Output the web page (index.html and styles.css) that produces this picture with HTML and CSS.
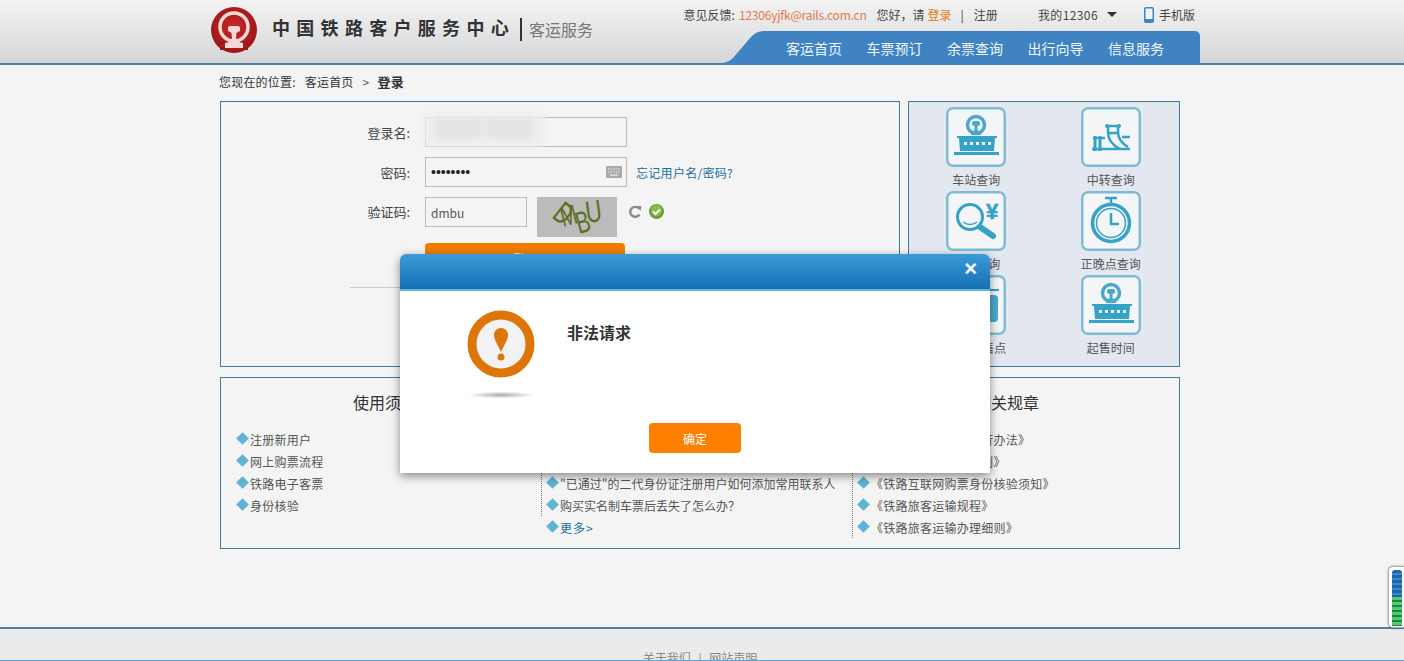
FILE: index.html
```html
<!DOCTYPE html>
<html lang="zh-CN">
<head>
    <meta charset="UTF-8">
    <title>登录 - 中国铁路客户服务中心</title>
    <link rel="stylesheet" href="styles.css">
</head>
<body>

    <svg class="icon-defs" width="0" height="0">
        <symbol id="stationIcon" viewBox="0 0 60 60">
            <circle cx="30" cy="18" r="8.500" fill="#f3f5f7" stroke="#4aa9cb" stroke-width="3.500"/>
            <path d="M26 16 q0 -2 2 -2 h4 q2 0 2 2 v2 l-2.500 1 v4 l3.500 3 v2 h-10 v-2 l3.500 -3 v-4 l-2.500 -1z" fill="#4aa9cb"/>
            <rect x="11" y="29" width="40" height="2" fill="#35a3c7"/>
            <path d="M13 31 h36 l-1 13 h-34z" fill="#35a3c7"/>
            <g fill="#f3f5f7">
                <rect x="18" y="35" width="3" height="3"/>
                <rect x="24" y="35" width="3" height="3"/>
                <rect x="30" y="35" width="3" height="3"/>
                <rect x="36" y="35" width="3" height="3"/>
                <rect x="42" y="35" width="3" height="3"/>
            </g>
            <rect x="8" y="45" width="45" height="3" fill="#35a3c7"/>
        </symbol>
    </svg>

    <!-- Header -->
    <div class="header">
        <div class="header-inner">
            <div class="brand">
                <svg class="logo" width="46" height="46" viewBox="0 0 46 46">
                    <defs>
                        <radialGradient id="logoRed" cx="50%" cy="45%" r="55%">
                            <stop offset="0" stop-color="#c92a2a"/>
                            <stop offset="1" stop-color="#9d1518"/>
                        </radialGradient>
                    </defs>
                    <circle cx="23" cy="23" r="23" fill="url(#logoRed)"/>
                    <circle cx="23" cy="20" r="14" fill="none" stroke="#f6d9d4" stroke-width="3.500"/>
                    <path d="M9 35 h28 v8 h-28z" fill="url(#logoRed)"/>
                    <path d="M17 21 q0 -2 2 -2 h8 q2 0 2 2 v3 q-2.500 1 -3.500 2 l-0.500 6 q1 3 7 4 v5 h-18 v-5 q6 -1 7 -4 l-0.500 -6 q-1 -1 -3.500 -2z" fill="#f6d9d4"/>
                </svg>
                <span class="brand-name">中国铁路客户服务中心</span>
                <span class="brand-sub">客运服务</span>
            </div>
            <div class="header-right">
                <div class="top-links">
                    <span>意见反馈:</span>
                    <a class="mail" href="#">12306yjfk@rails.com.cn</a>
                    <span class="hello">您好&#65292;请</span>
                    <a class="login-link" href="#">登录</a>
                    <span class="sep">|</span>
                    <a href="#">注册</a>
                    <a class="my12306" href="#">我的12306</a>
                    <span class="caret"></span>
                    <svg class="phone" width="10" height="16" viewBox="0 0 10 16">
                        <rect x="0.75" y="0.75" width="8.500" height="14.500" rx="1.200" fill="#eef4fa" stroke="#3f83c2" stroke-width="1.500"/>
                        <rect x="1" y="12" width="8" height="3" fill="#3f83c2"/>
                    </svg>
                    <a href="#">手机版</a>
                </div>
                <div class="nav">
                    <svg class="nav-curve" width="69" height="33" viewBox="0 0 69 33">
                        <path d="M69 0 H47 q-8 0 -13 6 L16 27 q-4 4 -10 5 H0 V33 H69z" fill="#3f83c2"/>
                    </svg>
                    <ul class="nav-items">
                        <li>客运首页</li>
                        <li>车票预订</li>
                        <li>余票查询</li>
                        <li>出行向导</li>
                        <li>信息服务</li>
                    </ul>
                </div>
            </div>
        </div>
    </div>

    <div class="main">
        <div class="crumbs">
            <span>您现在的位置:</span>
            <a href="#">客运首页</a>
            <span class="arrow">&gt;</span>
            <strong>登录</strong>
        </div>

        <div class="top-row">
            <!-- Login form -->
            <div class="login-box">
                <div class="form-row">
                    <label>登录名:</label>
                    <div class="blur-wrap">
                        <input class="field" type="text">
                        <div class="blur-mask"><span></span><span></span></div>
                    </div>
                </div>
                <div class="form-row">
                    <label>密码:</label>
                    <div class="blur-wrap">
                        <input class="field pass" type="password" value="12345678">
                        <svg class="keyboard" width="16" height="12" viewBox="0 0 16 12">
                            <rect width="16" height="12" rx="1" fill="#a9a9a9"/>
                            <path d="M2 3 h12 M2 6 h12" stroke="#eee" stroke-width="1.200" stroke-dasharray="1.500 1"/>
                            <path d="M4 9 h8" stroke="#eee" stroke-width="1.200"/>
                        </svg>
                    </div>
                    <a class="forgot" href="#">忘记用户名/密码?</a>
                </div>
                <div class="form-row code-row">
                    <label>验证码:</label>
                    <input class="field code" type="text" value="dmbu">
                    <svg class="captcha" width="80" height="40" viewBox="0 0 80 40">
                        <rect width="80" height="40" fill="#bbb"/>
                        <g class="captcha-text">
                            <text transform="translate(14 20) rotate(38) scale(0.75 1.100)">D</text>
                            <text transform="translate(26 30) rotate(-14) scale(0.7 1)">M</text>
                            <text transform="translate(42 37) rotate(-16) scale(0.75 1.100)">B</text>
                            <text transform="translate(50 26) rotate(-8) scale(0.8 1.100)">U</text>
                        </g>
                    </svg>
                    <svg class="refresh" width="14" height="14" viewBox="0 0 14 14">
                        <path d="M11.500 9.500 a5 5 0 1 1 -0.500 -6" fill="none" stroke="#8a8a8a" stroke-width="2.400"/>
                        <path d="M8 1 l5.500 0 l-1 5z" fill="#8a8a8a"/>
                    </svg>
                    <svg class="check" width="15" height="15" viewBox="0 0 15 15">
                        <circle cx="7.500" cy="7.500" r="7.500" fill="#6a9e30"/>
                        <circle cx="7.500" cy="6.500" r="5.500" fill="#8cbd4b"/>
                        <path d="M4 7.500 l2.500 2.500 l4.500 -4.500" fill="none" stroke="#fff" stroke-width="2"/>
                    </svg>
                </div>
                <button class="login-btn">登录</button>
                <div class="login-line"></div>
            </div>

            <!-- Shortcut icons -->
            <div class="side-box">
                <div class="side-item">
                    <div class="side-icon"><svg width="60" height="60"><use href="#stationIcon"/></svg></div>
                    <span>车站查询</span>
                </div>
                <div class="side-item">
                    <div class="side-icon">
                        <svg width="60" height="60" viewBox="0 0 60 60" fill="none" stroke="#35a3c7">
                            <path d="M12 42 h37" stroke-width="2.500"/>
                            <path d="M12 31 h12" stroke-width="2.500"/>
                            <path d="M14 29 v15 M19 29 v15" stroke-width="3"/>
                            <path d="M27 19 v6 q0 11 12 17" stroke-width="2.500"/>
                            <path d="M27 19 h10 v6 q0 9 10 15" stroke-width="2.500"/>
                            <path d="M27 26 h10" stroke-width="2.500"/>
                            <path d="M41 30 h8" stroke-width="2.500"/>
                            <circle cx="26" cy="19" r="1.500" fill="#35a3c7"/>
                            <circle cx="38" cy="19" r="1.500" fill="#35a3c7"/>
                            <circle cx="13" cy="42" r="1.500" fill="#35a3c7"/>
                        </svg>
                    </div>
                    <span>中转查询</span>
                </div>
                <div class="side-item">
                    <div class="side-icon">
                        <svg width="60" height="60" viewBox="0 0 60 60" fill="none" stroke="#35a3c7">
                            <circle cx="24" cy="26" r="12.500" stroke-width="3"/>
                            <path d="M17 31 q7 5 14 0" stroke-width="1.500"/>
                            <path d="M34 36 l13 9" stroke-width="6" stroke-linecap="round"/>
                            <text class="yen" x="46" y="28" text-anchor="middle">¥</text>
                        </svg>
                    </div>
                    <span>票价查询</span>
                </div>
                <div class="side-item">
                    <div class="side-icon">
                        <svg width="60" height="60" viewBox="0 0 60 60" fill="none" stroke="#35a3c7">
                            <path d="M24 7 h12" stroke-width="2.500"/>
                            <path d="M30 7 v6" stroke-width="2.500"/>
                            <circle cx="30" cy="32" r="18.500" stroke-width="3.500"/>
                            <circle cx="30" cy="32" r="14.500" stroke-width="1.500"/>
                            <path d="M30 22 v11 h8" stroke-width="2.500"/>
                        </svg>
                    </div>
                    <span>正晚点查询</span>
                </div>
                <div class="side-item">
                    <div class="side-icon">
                        <svg width="60" height="60" viewBox="0 0 60 60">
                            <rect x="8" y="14" width="45" height="2" fill="#35a3c7"/>
                            <rect x="10" y="20" width="42" height="27" rx="4" fill="#4aa9cb"/>
                        </svg>
                    </div>
                    <span>车票代售点</span>
                </div>
                <div class="side-item">
                    <div class="side-icon"><svg width="60" height="60"><use href="#stationIcon"/></svg></div>
                    <span>起售时间</span>
                </div>
            </div>
        </div>

        <!-- Help lists -->
        <div class="help-box">
            <div class="help-col col-one">
                <h3>使用须知</h3>
                <ul class="help-list">
                    <li>注册新用户</li>
                    <li>网上购票流程</li>
                    <li>铁路电子客票</li>
                    <li>身份核验</li>
                </ul>
            </div>
            <div class="help-col col-two">
                <h3>常见问题</h3>
                <ul class="help-list dotted">
                    <li>如何办理退票和改签</li>
                    <li>如何添加常用联系人</li>
                    <li>"已通过"的二代身份证注册用户如何添加常用联系人</li>
                    <li>购买实名制车票后丢失了怎么办&#65311;</li>
                </ul>
                <a class="more" href="#">更多&gt;</a>
            </div>
            <div class="help-col col-three">
                <h3>相关规章</h3>
                <ul class="help-list dotted">
                    <li>《铁路互联网售票暂行办法》</li>
                    <li>《广深港高铁乘车规则》</li>
                    <li>《铁路互联网购票身份核验须知》</li>
                    <li>《铁路旅客运输规程》</li>
                    <li>《铁路旅客运输办理细则》</li>
                </ul>
            </div>
        </div>
    </div>

    <div class="footer">
        <a href="#">关于我们</a>
        <span class="footer-sep">|</span>
        <a href="#">网站声明</a>
    </div>

    <!-- Side widget at the window edge -->
    <div class="edge-widget">
        <div class="edge-blue"></div>
        <div class="edge-green"></div>
    </div>

    <!-- Error dialog -->
    <div class="dialog">
        <div class="dialog-head">
            <span class="dialog-close">×</span>
        </div>
        <div class="dialog-body">
            <svg class="warn-icon" width="68" height="92" viewBox="0 0 68 92">
                <defs>
                    <radialGradient id="warnShadow">
                        <stop offset="0" stop-color="#aaa"/>
                        <stop offset="1" stop-color="#fff"/>
                    </radialGradient>
                </defs>
                <circle cx="34" cy="34" r="29" fill="#f2f2f4" stroke="#dd7508" stroke-width="9"/>
                <path d="M34 18 c-4 0 -7 3 -7 7 c0 5 5 12 7 17 c2 -5 7 -12 7 -17 c0 -4 -3 -7 -7 -7z" fill="#dd7508"/>
                <circle cx="34" cy="47" r="3.500" fill="#dd7508"/>
                <ellipse cx="34" cy="85" rx="33" ry="3.500" fill="url(#warnShadow)"/>
            </svg>
            <p class="dialog-text">非法请求</p>
        </div>
        <div class="dialog-foot">
            <button class="ok-btn">确定</button>
        </div>
    </div>

</body>
</html>
```

FILE: styles.css
```css
/* Global Styles */
html, body {
    height: 661px;
    overflow: hidden;
}

body {
    margin: 0;
    padding: 0;
    position: relative;
    background: #f4f4f4;
    color: #333;
    font-family: "Noto Sans CJK SC", "Liberation Sans", sans-serif;
    font-size: 12px;
}

a {
    color: inherit;
    text-decoration: none;
}

ul {
    list-style: none;
    margin: 0;
    padding: 0;
}

.icon-defs {
    display: block;
    height: 0;
}

/* Header */
.header {
    height: 63px;
    background: linear-gradient(#f3f3f3, #d5d6d8);
    border-bottom: 2px solid #4f80a6;
}

.header-inner {
    display: flex;
    justify-content: space-between;
    width: 989px;
    margin-left: 211px;
}

.brand {
    display: flex;
    align-items: center;
    height: 59px;
}

.logo {
    margin-right: 15px;
}

.brand-name {
    margin: -5px 5px 0 0;
    font-size: 18px;
    font-weight: 700;
    letter-spacing: 6.300px;
    color: #333;
}

.brand-sub {
    font-size: 16px;
    color: #777;
    border-left: 2px solid #333;
    padding-left: 7px;
    line-height: 23px;
}

.header-right {
    display: flex;
    flex-direction: column;
    align-items: flex-end;
}

.top-links {
    display: flex;
    align-items: center;
    height: 29px;
    margin-bottom: 2px;
    padding-right: 5px;
    color: #444;
}

.mail {
    margin-left: 4px;
    color: #e2794a;
    letter-spacing: -0.200px;
}

.hello {
    margin-left: 10px;
}

.login-link {
    color: #e27a10;
    margin-left: 3px;
}

.sep {
    margin: 0 10px 0 9px;
}

.my12306 {
    margin-left: 40px;
    letter-spacing: 0.400px;
}

.caret {
    width: 0;
    height: 0;
    margin-left: 9px;
    border-left: 5px solid transparent;
    border-right: 5px solid transparent;
    border-top: 5px solid #333;
}

.phone {
    margin-left: 27px;
    margin-right: 5px;
}

.nav {
    display: flex;
    height: 33px;
}

.nav-curve {
    display: block;
}

.nav-items {
    display: flex;
    gap: 24.500px;
    width: 414px;
    box-sizing: border-box;
    background: #3f83c2;
    border-radius: 0 5px 0 0;
    color: #f2f7fb;
    font-size: 14px;
    line-height: 34px;
}

/* Page body */
.main {
    width: 960px;
    margin-left: 220px;
}

.crumbs {
    display: flex;
    align-items: center;
    height: 36px;
    margin-left: -1px;
    padding-bottom: 4px;
    box-sizing: border-box;
    letter-spacing: 0.200px;
}

.crumbs a {
    margin-left: 9px;
}

.crumbs .arrow {
    margin: 0 8px 0 9px;
    color: #555;
}

.crumbs strong {
    font-size: 13px;
    font-weight: 700;
}

.top-row {
    display: flex;
    gap: 8px;
}

/* Login form */
.login-box {
    width: 680px;
    height: 266px;
    box-sizing: border-box;
    border: 1px solid #3f7a96;
    padding-top: 15px;
}

.form-row {
    display: flex;
    align-items: center;
    height: 30px;
    margin-bottom: 10px;
}

.form-row label {
    width: 189px;
    margin-right: 15px;
    text-align: right;
    font-size: 13px;
    color: #444;
}

.code-row {
    align-items: flex-start;
    height: 40px;
    margin-bottom: 6px;
}

.code-row label {
    line-height: 30px;
}

.blur-wrap {
    position: relative;
    height: 30px;
}

.field {
    display: block;
    width: 202px;
    height: 30px;
    box-sizing: border-box;
    padding: 0 5px;
    border: 1px solid #bbb;
    background: #f4f4f4;
    color: #555;
    font-family: inherit;
    font-size: 12px;
}

.pass {
    color: #222;
    font-family: "Liberation Sans", sans-serif;
    font-size: 14px;
    letter-spacing: 0;
}

.code {
    width: 102px;
}

.blur-mask {
    position: absolute;
    left: -2px;
    top: -3px;
    display: flex;
    gap: 4px;
    width: 122px;
    height: 33px;
    padding: 4px 12px;
    box-sizing: border-box;
    background: #eee;
    border-radius: 6px;
    filter: blur(3px);
}

.blur-mask span {
    display: block;
    width: 50px;
    height: 20px;
    background: #e4e4e4;
}

.keyboard {
    position: absolute;
    right: 5px;
    top: 9px;
}

.forgot {
    margin-left: 9px;
    color: #1a6f9c;
    letter-spacing: 0.300px;
}

.captcha {
    display: block;
    margin-left: 10px;
}

.captcha-text {
    font-family: "Liberation Sans", sans-serif;
    font-size: 28px;
    fill: #5d6e22;
}

.refresh {
    margin: 8px 0 0 11px;
}

.check {
    margin: 7px 0 0 7px;
}

.login-btn {
    display: block;
    width: 200px;
    height: 30px;
    margin-left: 204px;
    border: none;
    border-radius: 4px 4px 0 0;
    background: #f07c00;
    color: #fff;
    font-family: inherit;
    font-size: 12px;
}

.login-line {
    width: 500px;
    height: 1px;
    margin: 14px 0 0 129px;
    background: #ccc;
}

/* Shortcut icons */
.side-box {
    display: grid;
    grid-template-columns: 1fr 1fr;
    grid-auto-rows: 84px;
    width: 272px;
    height: 266px;
    box-sizing: border-box;
    padding: 5px 1px 0 0;
    border: 1px solid #3f7a96;
    background: #e3e7ef;
}

.side-item {
    display: flex;
    flex-direction: column;
    align-items: center;
    color: #555;
}

.side-icon {
    width: 60px;
    height: 60px;
    margin-bottom: 4px;
    border-radius: 7px;
    background: #f3f5f7;
    box-shadow: inset 0 0 0 2.500px #7fbcd4;
}

.side-icon svg {
    display: block;
}

.side-item span {
    line-height: 17px;
    white-space: nowrap;
}

.yen {
    font-family: "Liberation Sans", sans-serif;
    font-size: 22px;
    font-weight: 700;
    fill: #35a3c7;
    stroke: #35a3c7;
    stroke-width: 0.600;
}

/* Help lists */
.help-box {
    display: flex;
    width: 960px;
    height: 172px;
    margin-top: 10px;
    box-sizing: border-box;
    border: 1px solid #3f7a96;
}

.help-col h3 {
    margin: 11px 0 13px;
    font-size: 16px;
    font-weight: 400;
    line-height: 26px;
    color: #333;
}

.col-one {
    width: 320px;
    padding-left: 15px;
    box-sizing: border-box;
}

.col-one h3 {
    padding-left: 117px;
}

.col-two {
    width: 311px;
}

.col-two h3 {
    padding-left: 120px;
}

.col-three {
    flex: 1;
}

.col-three h3 {
    padding-left: 123px;
}

.help-list li,
.more {
    display: flex;
    align-items: center;
    height: 22px;
    color: #555;
    white-space: nowrap;
}

.col-one li,
.col-three li {
    letter-spacing: 0.250px;
}

.help-list li::before,
.more::before {
    content: "";
    flex: none;
    width: 9px;
    height: 9px;
    margin: -2px 3px 0 2px;
    background: #5fb3d5;
    transform: rotate(45deg);
}

.dotted {
    border-left: 1px dotted #777;
    padding-left: 4px;
}

.more {
    margin-left: 5px;
    color: #1a6f9c;
    letter-spacing: 1px;
}

/* Footer */
.footer {
    height: 34px;
    margin-top: 78px;
    box-sizing: border-box;
    border-top: 2px solid #4f80a6;
    border-bottom: 1px solid #6c9fd2;
    background: #ebebeb;
    color: #888;
    text-align: center;
    line-height: 58px;
    overflow: hidden;
    padding-right: 4px;
}

.footer-sep {
    margin: 0 5px;
}

/* Side widget */
.edge-widget {
    position: absolute;
    top: 566px;
    left: 1388px;
    width: 16px;
    height: 62px;
    box-sizing: border-box;
    padding: 3px 2px 3px 3px;
    border: 1px solid #aaa;
    border-right: none;
    border-radius: 5px 0 0 5px;
    background: #fff;
    box-shadow: 0 0 3px rgba(0, 0, 0, 0.3);
}

.edge-blue {
    height: 27px;
    background: repeating-linear-gradient(#1d66aa 0, #1d66aa 3px, #3f86c8 3px, #3f86c8 5px);
    border-radius: 3px 3px 0 0;
}

.edge-green {
    height: 29px;
    background: repeating-linear-gradient(#4ccf69 0, #4ccf69 3px, #23804a 3px, #23804a 5px);
}

/* Error dialog */
.dialog {
    position: absolute;
    top: 254px;
    left: 400px;
    width: 590px;
    height: 219px;
    border-radius: 6px 6px 0 0;
    background: #fff;
    box-shadow: 0 3px 10px rgba(0, 0, 0, 0.45);
}

.dialog-head {
    display: flex;
    justify-content: flex-end;
    height: 35px;
    border-bottom: 2px solid #5fb5e0;
    border-radius: 6px 6px 0 0;
    background: linear-gradient(#3a9bd8, #1570b5);
}

.dialog-close {
    margin-right: 13px;
    color: #fff;
    font-family: "Liberation Sans", sans-serif;
    font-size: 22px;
    font-weight: 700;
    line-height: 30px;
}

.dialog-body {
    display: flex;
    height: 113px;
    padding: 19px 0 0 67px;
}

.warn-icon {
    display: block;
    margin-right: 32px;
}

.dialog-text {
    margin: 10px 0 0;
    font-size: 16px;
    font-weight: 700;
    color: #333;
}

.dialog-foot {
    display: flex;
    justify-content: center;
}

.ok-btn {
    width: 92px;
    height: 30px;
    border: none;
    border-radius: 4px;
    background: #ff7f00;
    color: #fff;
    font-family: inherit;
    font-size: 12px;
}
```
